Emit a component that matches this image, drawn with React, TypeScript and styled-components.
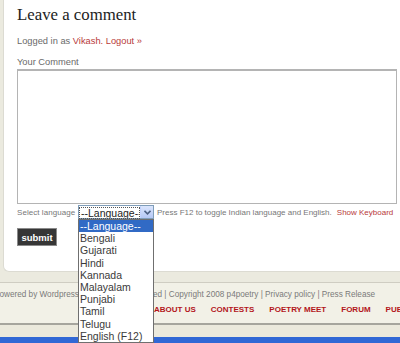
import React from 'react';
import styled, { createGlobalStyle } from 'styled-components';

const GlobalStyle = createGlobalStyle`
  html, body {
    margin: 0;
    padding: 0;
    background: #ebeadf;
    font-family: "Liberation Sans", Arial, sans-serif;
  }
`;

const Page = styled.div`
  width: 400px;
  height: 343px;
  overflow: hidden;
  display: flex;
  flex-direction: column;
`;

const Card = styled.div`
  margin-left: 3px;
  margin-right: -30px;
  height: 272px;
  box-sizing: border-box;
  background: #fff;
  border-left: 1px solid #dcdbd2;
  border-bottom: 1px solid #dcdbd2;
  border-bottom-left-radius: 6px;
  padding: 4px 0 0 13px;
  display: flex;
  flex-direction: column;
  align-items: flex-start;
`;

const Heading = styled.h2`
  margin: 0;
  font-family: "Liberation Serif", "Times New Roman", serif;
  font-weight: normal;
  font-size: 16.8px;
  line-height: 22px;
  color: #222;
`;

const Meta = styled.div`
  margin-top: 9px;
  font-size: 9.3px;
  line-height: 12px;
  color: #6a6a6a;
`;

const Red = styled.span`
  color: #b83a3a;
`;

const Label = styled.div`
  margin-top: 9px;
  font-size: 9.3px;
  line-height: 12px;
  color: #6a6a6a;
`;

const CommentBox = styled.textarea`
  margin-top: 1px;
  width: 380px;
  height: 135px;
  box-sizing: border-box;
  border: 1px solid #b4b4b4;
  border-top-width: 2px;
  resize: none;
  outline: none;
`;

const LangRow = styled.div`
  margin-top: 1px;
  height: 14px;
  display: flex;
  align-items: center;
  font-size: 8px;
  color: #777;
  white-space: nowrap;
`;

const LangLabel = styled.span`
  width: 58px;
  margin-right: 3px;
  letter-spacing: 0.05px;
`;

const SelectWrap = styled.div`
  position: relative;
  width: 76px;
  height: 14px;
  box-sizing: border-box;
  border: 1px solid #7f9db9;
  display: flex;
  margin-right: 3px;
  background: #fff;
`;

const SelectText = styled.span`
  flex: 1;
  overflow: hidden;
  font-size: 10.5px;
  line-height: 10px;
  color: #222;
  border: 1px dotted #555;
  padding-left: 1px;
  margin: 1px 0 0 0;
  box-sizing: border-box;
  height: 12px;
`;

const ArrowButton = styled.span`
  width: 12px;
  display: flex;
  align-items: center;
  justify-content: center;
  background: linear-gradient(#dbe6fd, #b5c8f5);
  border-left: 1px solid #c3d3fd;
`;

const DropList = styled.ul`
  position: absolute;
  left: -1px;
  top: 13px;
  width: 76px;
  margin: 0;
  padding: 0;
  list-style: none;
  background: #fff;
  border: 1px solid #6f6f6f;
  box-sizing: border-box;
  z-index: 5;
`;

const DropItem = styled.li<{ $active?: boolean }>`
  font-size: 10.5px;
  line-height: 12.2px;
  padding-left: 1px;
  color: ${({ $active }) => ($active ? '#fff' : '#3a3a3a')};
  background: ${({ $active }) => ($active ? '#316ac5' : 'transparent')};
`;

const Hint = styled.span`
  margin-right: 5px;
`;

const SubmitButton = styled.button`
  margin-top: 9px;
  width: 40px;
  height: 18px;
  padding: 0;
  background: #363636;
  border: 1px solid #8a8a8a;
  color: #fff;
  font-family: "Liberation Sans", Arial, sans-serif;
  font-weight: bold;
  font-size: 9.5px;
`;

const Footer = styled.div`
  margin-top: 10px;
  border-top: 1px solid #cfcdc2;
  border-bottom: 2px solid #a6a59d;
  background: #f2f1e7;
  padding: 6px 0 10px;
  height: 43px;
  box-sizing: border-box;
`;

const FooterText = styled.div`
  margin-left: -6px;
  font-size: 8.2px;
  line-height: 12px;
  color: #7a7a7a;
  white-space: nowrap;
`;

const Nav = styled.div`
  margin-top: 3px;
  padding-left: 115px;
  display: flex;
  gap: 15px;
  font-size: 8px;
  line-height: 12px;
  font-weight: bold;
  color: #b3151a;
  white-space: nowrap;
`;

const Strip = styled.div`
  height: 12px;
  background: #ebe9dc;
`;

const Taskbar = styled.div`
  flex: 1;
  background: #3168d5;
`;

const languages = ['Bengali', 'Gujarati', 'Hindi', 'Kannada', 'Malayalam', 'Punjabi', 'Tamil', 'Telugu', 'English (F12)'];
const navItems = ['HOME', 'ABOUT US', 'CONTESTS', 'POETRY MEET', 'FORUM', 'PUBLICATIONS'];

const App = () => {
  return (
    <Page>
      <GlobalStyle />
      <Card>
        <Heading>Leave a comment</Heading>
        <Meta>
          Logged in as <Red>Vikash.</Red> <Red>Logout »</Red>
        </Meta>
        <Label>Your Comment</Label>
        <CommentBox />
        <LangRow>
          <LangLabel>Select language</LangLabel>
          <SelectWrap>
            <SelectText>--Language--</SelectText>
            <ArrowButton>
              <svg width="7" height="5" viewBox="0 0 7 5">
                <path d="M0.5 0.8 L3.5 3.8 L6.5 0.8" fill="none" stroke="#4d6185" strokeWidth="1.6" />
              </svg>
            </ArrowButton>
            <DropList>
              <DropItem $active>--Language--</DropItem>
              {languages.map((l) => (
                <DropItem key={l}>{l}</DropItem>
              ))}
            </DropList>
          </SelectWrap>
          <Hint>Press F12 to toggle Indian language and English.</Hint>
          <Red>Show Keyboard</Red>
        </LangRow>
        <SubmitButton>submit</SubmitButton>
      </Card>
      <Footer>
        <FooterText>
          Powered by Wordpress{'\u00a0'} | {'\u00a0'}All Rights Reserved | Copyright 2008 p4poetry | Privacy policy | Press Release
        </FooterText>
        <Nav>
          {navItems.map((n) => (
            <span key={n}>{n}</span>
          ))}
        </Nav>
      </Footer>
      <Strip />
      <Taskbar />
    </Page>
  );
};

export default App;
